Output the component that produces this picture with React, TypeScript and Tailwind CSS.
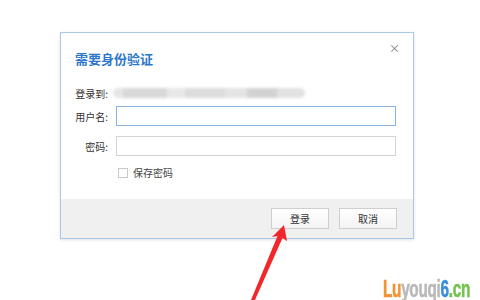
import React from 'react';

const cjk = { fontFamily: '"Microsoft YaHei", "Noto Sans CJK SC", "Noto Sans", sans-serif' };

const Field: React.FC<{ label: string; focused?: boolean }> = ({ label, focused }) => (
  <div className="flex items-center h-[20px]">
    <div className="w-[36px] text-right text-[10px] text-[#333] whitespace-nowrap">{label}</div>
    <div
      className={`ml-[8px] w-[280px] h-[20px] bg-white border ${
        focused ? 'border-[#8db3dd]' : 'border-[#d4d4d4]'
      }`}
    />
  </div>
);

const App: React.FC = () => {
  return (
    <div className="relative w-[480px] h-[300px] bg-white overflow-hidden" style={cjk}>
      <div className="pt-[32px] pl-[60px]">
        <div className="relative w-[354px] h-[207px] border border-[#a9c9ea] bg-white shadow-[0_1px_3px_rgba(0,0,0,0.12)] flex flex-col">
          <button className="absolute top-[9px] right-[13px] text-[11px] leading-[12px] text-[#777]">×</button>
          <div className="pt-[18px] pl-[14px] text-[13px] leading-[16px] font-bold text-[#2d76c9]">需要身份验证</div>

          <div className="mt-[16px] pl-[11px] flex flex-col">
            <div className="flex items-center h-[20px]">
              <div className="w-[36px] text-right text-[10px] text-[#333] whitespace-nowrap">登录到:</div>
              <div className="ml-[5px] w-[192px] h-[10px] flex blur-[1.5px]">
                <div className="w-[10px] h-full bg-[#e6e6e6] rounded-l-full" />
                <div className="w-[44px] h-full bg-[#d8d8d8]" />
                <div className="w-[18px] h-full bg-[#e8e8e8]" />
                <div className="w-[40px] h-full bg-[#dcdcdc]" />
                <div className="w-[22px] h-full bg-[#e4e4e4]" />
                <div className="w-[30px] h-full bg-[#d2d2d2]" />
                <div className="w-[28px] h-full bg-[#e2e2e2] rounded-r-full" />
              </div>
            </div>
            <div className="mt-[3px]">
              <Field label="用户名:" focused />
            </div>
            <div className="mt-[10px]">
              <Field label="密码:" />
            </div>
            <div className="mt-[11px] flex items-center h-[11px] pl-[46px]">
              <div className="w-[10px] h-[10px] border border-[#c8c8c8] bg-white" />
              <span className="ml-[5px] text-[10px] text-[#444]">保存密码</span>
            </div>
          </div>

          <div className="mt-auto h-[39px] bg-[#f0f0f0] flex items-start justify-end gap-[10px] pt-[9px] pr-[16px]">
            <div className="w-[58px] h-[21px] border border-[#cfcfcf] bg-gradient-to-b from-white to-[#f4f4f4] flex items-center justify-center text-[10px] text-[#333]">
              登录
            </div>
            <div className="w-[58px] h-[21px] border border-[#cfcfcf] bg-gradient-to-b from-white to-[#f4f4f4] flex items-center justify-center text-[10px] text-[#333]">
              取消
            </div>
          </div>
        </div>
      </div>

      <svg className="absolute left-0 top-0" width="480" height="300" viewBox="0 0 480 300">
        <polygon
          points="284,225 287,241 282.5,238 255,300 251,300 277.5,236 272,237"
          fill="#f2262b"
        />
      </svg>

      <div
        className="absolute left-[383px] top-[279px] text-[24px] leading-[20px] font-bold tracking-[-0.5px] whitespace-nowrap origin-left scale-x-[0.64] blur-[0.4px]"
        style={{ fontFamily: '"Liberation Sans", Arial, sans-serif', WebkitTextStroke: '0.6px currentColor' }}
      >
        <span className="text-[#f29233]">Lu</span>
        <span className="text-[#b9b9b9]">youqi</span>
        <span className="text-[#3c8fdb]">6</span>
        <span className="text-[#74c34f]">.cn</span>
      </div>
    </div>
  );
};

export default App;
